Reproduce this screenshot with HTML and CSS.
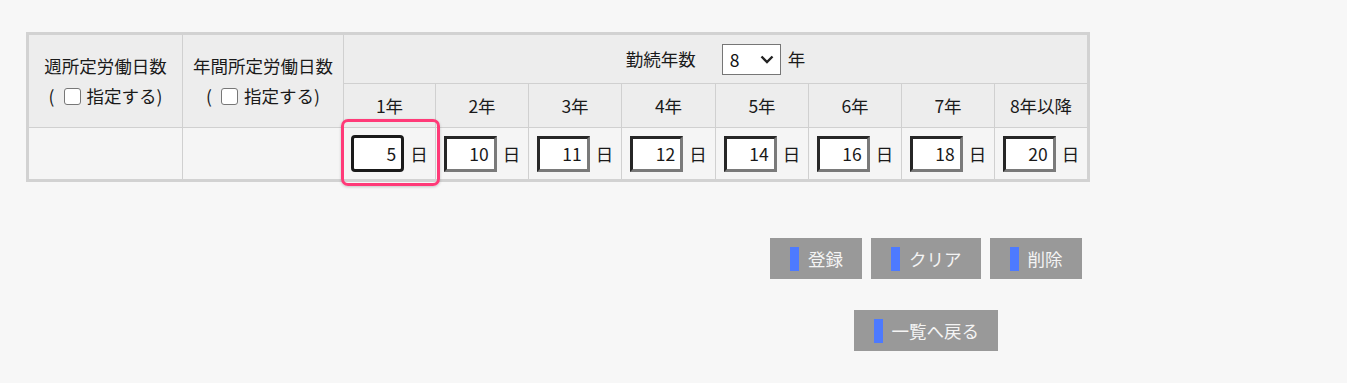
FILE: index.html
```html
<!DOCTYPE html>
<html lang="ja">
<head>
<meta charset="utf-8">
<title>有給休暇付与日数</title>
<link rel="stylesheet" href="styles.css">
</head>
<body>
<div class="wrap">
  <table class="grid">
    <colgroup>
      <col class="c-week"><col class="c-year-total">
      <col class="c-y1"><col class="c-y"><col class="c-y"><col class="c-y4"><col class="c-y"><col class="c-y"><col class="c-y"><col class="c-y8">
    </colgroup>
    <tr class="r1">
      <th rowspan="2" class="multi">週所定労働日数<br>(<input type="checkbox" class="chk">指定する)</th>
      <th rowspan="2" class="multi">年間所定労働日数<br>(<input type="checkbox" class="chk">指定する)</th>
      <th colspan="8" class="years-head"><span class="yh">勤続年数<span class="sel-wrap"><select class="sel"><option>8</option></select><svg class="chev" width="14" height="9" viewBox="0 0 14 9"><path d="M1.5 1.5 L7 7 L12.5 1.5" fill="none" stroke="#222" stroke-width="2.4"/></svg></span>年</span></th>
    </tr>
    <tr class="r2">
      <th>1年</th><th>2年</th><th>3年</th><th>4年</th><th>5年</th><th>6年</th><th>7年</th><th>8年以降</th>
    </tr>
    <tr class="r3">
      <td></td><td></td>
      <td><span class="cell"><input class="num focused" value="5">日</span></td>
      <td><span class="cell"><input class="num" value="10">日</span></td>
      <td><span class="cell"><input class="num" value="11">日</span></td>
      <td><span class="cell"><input class="num" value="12">日</span></td>
      <td><span class="cell"><input class="num" value="14">日</span></td>
      <td><span class="cell"><input class="num" value="16">日</span></td>
      <td><span class="cell"><input class="num" value="18">日</span></td>
      <td><span class="cell"><input class="num" value="20">日</span></td>
    </tr>
  </table>
  <div class="highlight"></div>
  <div class="actions">
    <div class="btn-row">
      <button class="btn"><span class="bar"></span>登録</button>
      <button class="btn"><span class="bar"></span>クリア</button>
      <button class="btn"><span class="bar"></span>削除</button>
    </div>
    <div class="btn-row">
      <button class="btn"><span class="bar"></span>一覧へ戻る</button>
    </div>
  </div>
</div>
</body>
</html>
```
FILE: styles.css
```css
body {
  margin: 8px;
  background: #f7f7f7;
  font-family: "Noto Sans CJK JP", "Noto Sans", sans-serif;
  font-size: 17.5px;
  color: #1a1a1a;
}
.wrap {
  position: relative;
  width: 1063px;
  margin: 24px 0 0 18px;
}
.grid {
  width: 1061px;
  table-layout: fixed;
  border-collapse: collapse;
  border: 3px solid #d2d2d2;
}
.c-week { width: 155px; }
.c-year-total { width: 161px; }
.c-y1 { width: 92px; }
.c-y { width: 93px; }
.c-y4 { width: 94px; }
.c-y8 { width: 94px; }
.grid th, .grid td {
  border: 1px solid #d0d0d0;
  padding: 0;
  font-weight: normal;
  text-align: center;
  vertical-align: middle;
}
.grid th { background: #ededed; }
.grid td { background: #f5f5f5; }
.r1 th { height: 48px; line-height: 30px; }
.r2 th { height: 43px; line-height: 24px; }
.r3 td { height: 51px; }
.multi { line-height: 30px; }
.chk {
  appearance: none;
  -webkit-appearance: none;
  width: 17px;
  height: 17px;
  margin: 0 6px 0 9px;
  border: 1.5px solid #777;
  border-radius: 3px;
  background: #fff;
  vertical-align: -2px;
}
.yh {
  display: inline-flex;
  align-items: center;
}
.sel-wrap {
  position: relative;
  display: inline-block;
  margin: 0 7px 0 26px;
  height: 31px;
}
.sel {
  appearance: none;
  -webkit-appearance: none;
  box-sizing: border-box;
  display: block;
  width: 59px;
  height: 31px;
  margin: 0;
  padding: 0 0 0 7px;
  border: 1px solid #767676;
  border-radius: 0;
  background: #fff;
  font-family: inherit;
  font-size: 17.5px;
  line-height: 29px;
  color: #111;
}
.chev {
  position: absolute;
  right: 7px;
  top: 11px;
  pointer-events: none;
}
.cell {
  display: inline-flex;
  align-items: center;
  gap: 6px;
  line-height: 24px;
}
.num {
  box-sizing: border-box;
  width: 53px;
  height: 36px;
  padding: 0 5px 0 0;
  margin: 0;
  border-style: solid;
  border-width: 3px;
  border-color: #262626 #7a7a7a #7a7a7a #262626;
  background: #fff;
  text-align: right;
  font-family: inherit;
  font-size: 17.5px;
  color: #1a1a1a;
}
.num.focused {
  height: 37px;
  border-color: #1a1a1a;
  border-radius: 4px;
}
.highlight {
  position: absolute;
  left: 315px;
  top: 87px;
  width: 99px;
  height: 67px;
  box-sizing: border-box;
  border: 3px solid #ff3a78;
  border-radius: 7px;
  box-shadow: 0 1px 3px rgba(0, 0, 0, 0.2);
}
.actions {
  display: flex;
  flex-direction: column;
  align-items: center;
  width: max-content;
  margin: 56px 0 0 744px;
  gap: 31px;
}
.btn-row {
  display: flex;
  gap: 9px;
}
.btn {
  display: flex;
  align-items: center;
  flex-shrink: 0;
  white-space: nowrap;
  height: 41px;
  padding: 0 19px 0 20px;
  border: none;
  border-radius: 0;
  background: #999999;
  color: #f4f4f4;
  font-family: inherit;
  font-size: 17.5px;
}
.bar {
  display: block;
  width: 9px;
  height: 24px;
  margin-right: 9px;
  background: #4d7aff;
}
```
